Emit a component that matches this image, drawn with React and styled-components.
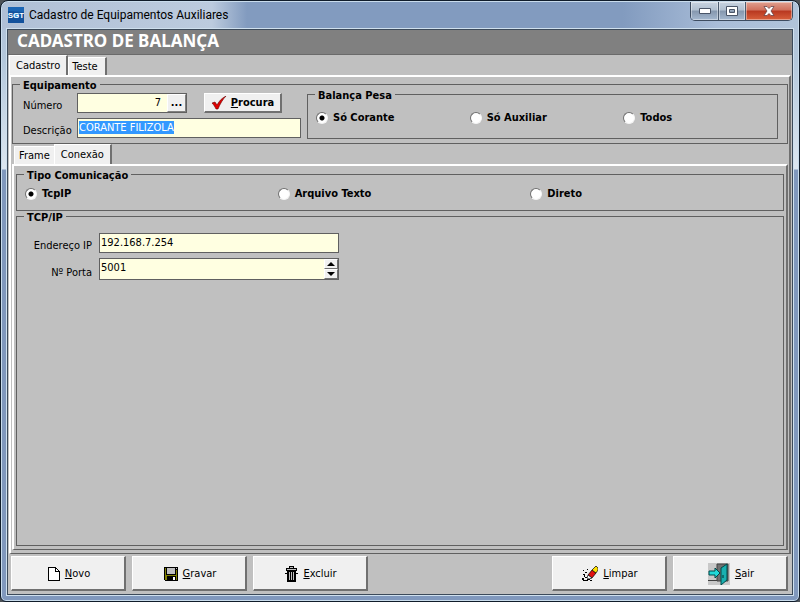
import React, { useEffect, useRef } from 'react';
import styled, { createGlobalStyle } from 'styled-components';

const GlobalStyle = createGlobalStyle`
  * {
    box-sizing: border-box;
  }
  body {
    margin: 0;
    background: #4d5257;
    color: #000;
    font-family: "DejaVu Sans Condensed", "DejaVu Sans", Tahoma, sans-serif;
    font-size: 11px;
    line-height: 14px;
  }
  input, button {
    font: inherit;
    color: inherit;
  }
`;

const Window = styled.div`
  display: flex;
  flex-direction: column;
  min-height: 100vh;
  padding: 0 6px 6px;
  border: 1px solid #101c2a;
  border-radius: 8px 8px 6px 6px;
  box-shadow: inset 0 0 0 1px #c9dcec;
  background: linear-gradient(#aebfd6 0, #b4c8dc 60px, #dce6f0 168px, #8098bd 169px, #8098bd 100%);
`;

const TitleBar = styled.header`
  display: flex;
  align-items: flex-start;
  margin: 1px -5px 0;
  padding-left: 6px;
  height: 27px;
  border-radius: 6px 6px 0 0;
  background: linear-gradient(90deg, #b0c0d6 0, #bccbde 210px, #829bbf 245px, #829bbf 78%, #a9bdd8 90%, #b0c4da 100%);
`;

const Caption = styled.h1`
  flex: 1;
  margin: 0;
  padding: 4px 0 0 5px;
  font-family: Roboto, "Noto Sans", sans-serif;
  font-size: 12px;
  font-weight: 400;
  line-height: 18px;
`;

const LogoBox = styled.div`
  padding-top: 5px;
  height: 21px;
`;

const WindowButtons = styled.div`
  display: flex;
  margin-right: 5px;
  border: 1px solid #3d4c60;
  border-top: 0;
  border-radius: 0 0 5px 5px;
  overflow: hidden;
`;

const WindowButton = styled.button`
  display: flex;
  align-items: center;
  justify-content: center;
  width: ${({ $close }) => ($close ? 47 : 27)}px;
  height: 18px;
  padding: 0;
  border: 0;
  border-left: ${({ $first }) => ($first ? 0 : 1)}px solid #4b5a6e;
  box-shadow: inset 0 0 0 1px rgba(255, 255, 255, 0.4);
  background: ${({ $close }) => ($close
    ? 'linear-gradient(#e0a090 0, #d0705c 45%, #b83820 50%, #d8603c 100%)'
    : 'linear-gradient(#c8d3e0 0, #b0bfd0 45%, #8597ae 50%, #a5b8cf 100%)')};
`;

const Client = styled.main`
  flex: 1;
  display: flex;
  flex-direction: column;
  border: 1px solid #3c4a5a;
  box-shadow: 0 0 0 1px #cfe0ee;
  background: #c0c0c0;
`;

const Heading = styled.h2`
  margin: 0;
  padding: 1px 9px 3px;
  border-bottom: 1px solid #6a6a6a;
  background: #808080;
  color: #fff;
  font-family: "Noto Sans", "Open Sans", sans-serif;
  font-size: 17px;
  line-height: 20px;
`;

const Tabs = styled.div`
  display: flex;
  align-items: flex-end;
  height: 20px;
  padding-left: ${({ $nested }) => ($nested ? 2 : 1)}px;
`;

const Tab = styled.button`
  height: ${({ $active }) => ($active ? 20 : 18)}px;
  padding: ${({ $active, $edge }) => {
    if ($active) return '0 6px';
    return $edge ? '0 7px 0 3px' : '0 4px';
  }};
  border: 0;
  border-top: 1px solid #fff;
  border-left: 1px solid #fff;
  border-right: ${({ $edge }) => ($edge ? 2 : 0)}px solid #707070;
  background: #f0f0f0;
  white-space: nowrap;
`;

const Page = styled.section`
  flex: 1;
  display: flex;
  flex-direction: column;
  margin: 0 ${({ $nested }) => ($nested ? 0 : 1)}px;
  padding: ${({ $nested }) => ($nested ? '3px 2px' : '2px 1px 3px')};
  border: 2px solid #fff;
  border-right-color: #707070;
  border-bottom: 1px solid #606060;
`;

const Group = styled.fieldset`
  min-width: 0;
  flex: ${({ $grow }) => ($grow ? 1 : 'none')};
  margin: 0;
  padding: 0;
  border: 1px solid #606060;
`;

// the caption hangs a little below the frame line
const Legend = styled.legend`
  margin-left: 7px;
  padding: 2px 3px 0;
  height: 10px;
  line-height: 10px;
  font-weight: 700;
`;

const Equipment = styled.div`
  display: flex;
  gap: 6px;
  padding: 0 9px 4px 0;
`;

const EquipmentFields = styled.div`
  display: grid;
  grid-template-columns: 58px 224px;
  column-gap: 6px;
  row-gap: 5px;
  align-content: start;
  padding-top: 4px;
`;

const Label = styled.label`
  padding: 6px 0 0 10px;
  text-align: ${({ $right }) => ($right ? 'right' : 'left')};
  white-space: nowrap;
`;

const Line = styled.div`
  display: flex;
  gap: 17px;
`;

const Box = styled.div`
  display: flex;
  width: ${({ $width }) => $width}px;
  height: ${({ $tall }) => ($tall ? 22 : 20)}px;
  border: 1px solid #606060;
  background: #ffffe1;
`;

const TextInput = styled.input`
  flex: 1;
  min-width: 0;
  height: 16px;
  padding: 0 ${({ $right }) => ($right ? 6 : 1)}px;
  border: 0;
  outline: 0;
  background: transparent;
  text-align: ${({ $right }) => ($right ? 'right' : 'left')};
  &::selection {
    background: #3399ff;
    color: #fff;
  }
`;

const BrowseButton = styled.button`
  width: 19px;
  padding: 0;
  border: 1px solid #fff;
  border-right-color: #808080;
  border-bottom-color: #808080;
  background: #f0f0f0;
  font-weight: 700;
`;

const SearchButton = styled.button`
  display: flex;
  align-items: center;
  justify-content: center;
  gap: 4px;
  width: 78px;
  height: 20px;
  padding: 0;
  border: 1px solid #fff;
  border-right: 2px solid #707070;
  border-bottom: 2px solid #707070;
  background: #f0f0f0;
  font-weight: 700;
`;

const RadioRow = styled.div`
  display: grid;
  grid-template-columns: repeat(3, 1fr);
  padding: ${({ $spaced }) => ($spaced ? '12px 0 13px 8px' : '8px 0 9px 8px')};
`;

const RadioLabel = styled.label`
  display: flex;
  align-items: center;
  gap: 5px;
  font-weight: 700;
  white-space: nowrap;
`;

const Radio = styled.input`
  appearance: none;
  width: 12px;
  height: 12px;
  margin: 0;
  border: 1px solid;
  border-color: #707070 #f4f4f4 #f4f4f4 #707070;
  border-radius: 50%;
  background: #fff;
  &:checked {
    background: radial-gradient(circle, #000 0, #000 2px, #fff 3px);
  }
`;

const BalanceGroup = styled(Group)`
  flex: 1;
`;

const TcpFields = styled.div`
  display: grid;
  grid-template-columns: 75px 240px;
  column-gap: 7px;
  row-gap: 5px;
  align-items: end;
  padding-top: 12px;
`;

const Spinner = styled.div`
  display: flex;
  flex-direction: column;
  width: 14px;
`;

const SpinButton = styled.button`
  flex: 1;
  display: flex;
  align-items: center;
  justify-content: center;
  padding: 0;
  border: 1px solid #fff;
  border-right-color: #707070;
  border-bottom-color: #707070;
  background: #f0f0f0;
`;

const Footer = styled.footer`
  display: flex;
  gap: 6px;
  padding: 2px 4px 3px 3px;
`;

const Spacer = styled.div`
  flex: 1;
`;

const ActionButton = styled.button`
  display: flex;
  align-items: center;
  justify-content: center;
  gap: 5px;
  width: 115px;
  height: 35px;
  padding: 2px 0 0 2px;
  border: 1px solid #fff;
  border-right: 2px solid #707070;
  border-bottom: 2px solid #707070;
  background: #f0f0f0;
`;

const LogoText = styled.text`
  font-family: "Liberation Sans", Arial, sans-serif;
  font-size: 8px;
  font-weight: 700;
  fill: #fff;
`;

const Logo = () => (
  <svg width="16" height="16" viewBox="0 0 16 16" aria-hidden="true">
    <rect width="16" height="16" fill="#14529c" />
    <path d="M0 0h16v5L0 4z" fill="#1c66b4" />
    <path d="M6 6h5v5H6z" fill="#3c96dc" />
    <LogoText x="8" y="11" textAnchor="middle">SGT</LogoText>
  </svg>
);

const CheckIcon = () => (
  <svg width="16" height="14" viewBox="0 0 16 14" aria-hidden="true">
    <path d="M1 7l3-1 2 3C8 5 11 2 15 0 12 3 9 8 7 13H5C4 11 3 9 1 7z" fill="#e00000" stroke="#600" strokeWidth=".6" />
  </svg>
);

const NewIcon = () => (
  <svg width="12" height="14" viewBox="0 0 12 14" shapeRendering="crispEdges" aria-hidden="true">
    <path d="M.5.5h7l4 4v9H.5z" fill="#fff" stroke="#000" />
    <path d="M7.500.5v4h4" fill="none" stroke="#000" />
  </svg>
);

const SaveIcon = () => (
  <svg width="14" height="14" viewBox="0 0 14 14" shapeRendering="crispEdges" aria-hidden="true">
    <path d="M0 0h14v14H1l-1-1z" fill="#000" />
    <path d="M1 1h1v7h10V3h1v10H1z" fill="#808000" />
    <path d="M3 1h8v6H3z" fill="#c0c0c0" />
    <path d="M12 1h1v1h-1z" fill="#c0c0c0" />
    <path d="M3 9h9v4H3z" fill="#000" />
    <path d="M9 10h2v3H9z" fill="#fff" />
  </svg>
);

const TrashIcon = () => (
  <svg width="13" height="16" viewBox="0 0 13 16" shapeRendering="crispEdges" aria-hidden="true">
    <path d="M4 0h5v2h3v3H1V2h3zM2 5h9v11H2z" fill="#000" />
    <path d="M5 1h3v1H5zM2 3h9v1H2z" fill="#c0c0c0" />
    <path d="M4 6h1v8H4zM6 6h1v8H6zM8 6h1v8H8z" fill="#c0c0c0" />
    <path d="M0 7h2v1H0zM11 7h2v1h-2z" fill="#000" />
  </svg>
);

const EraserIcon = () => (
  <svg width="16" height="16" viewBox="0 0 16 16" aria-hidden="true">
    <path d="M6 9l4-5 4 3-4 5z" fill="#e01010" stroke="#000" strokeWidth=".7" />
    <path d="M10 4l4-4 2 2v2l-2 3z" fill="#ffe000" stroke="#000" strokeWidth=".7" />
    <path d="M6 9l-1 3 2 1 3-1z" fill="#fff" stroke="#000" strokeWidth=".7" />
    <path d="M1 4h1v1H1zM5 3h1v1H5zM3 6h2v1H3zM1 8h2v1H1zM2 9h1v2H2zM0 12h2v2H0zM3 11h2v1H3zM1 14h5v1H1zM5 13h3v1H5zM8 14h2v1H8z" fill="#000" shapeRendering="crispEdges" />
  </svg>
);

const ExitIcon = () => (
  <svg width="22" height="22" viewBox="0 0 22 22" aria-hidden="true">
    <path d="M0 0h22v22H0z" fill="#c8c8c8" />
    <path d="M9 1h11v17H9z" fill="#707070" stroke="#404040" />
    <path d="M0 17h9v1H0z" fill="#404040" />
    <path d="M13 5l6-4v16l-6 5z" fill="#18b0b0" stroke="#004848" />
    <path d="M15 12v3" stroke="#003030" />
    <path d="M1 8h6V5l5 5-5 5v-3H1z" fill="#20d8d8" stroke="#004848" />
  </svg>
);

const actions = [
  { key: 'N', rest: 'ovo', icon: <NewIcon /> },
  { key: 'G', rest: 'ravar', icon: <SaveIcon /> },
  { key: 'E', rest: 'xcluir', icon: <TrashIcon /> },
];

const exitActions = [
  { key: 'L', rest: 'impar', icon: <EraserIcon /> },
  { key: 'S', rest: 'air', icon: <ExitIcon /> },
];

const renderAction = ({ key, rest, icon }) => (
  <ActionButton key={key} type="button">
    {icon}
    <span><u>{key}</u>{rest}</span>
  </ActionButton>
);

const RadioGroup = ({ name, options, spaced }) => (
  <RadioRow $spaced={spaced}>
    {options.map((option, i) => (
      <RadioLabel key={option}>
        <Radio type="radio" name={name} defaultChecked={i === 0} />
        {option}
      </RadioLabel>
    ))}
  </RadioRow>
);

const App = () => {
  const description = useRef(null);

  useEffect(() => {
    description.current.focus();
    description.current.select();
  }, []);

  return (
    <>
      <GlobalStyle />
      <Window>
        <TitleBar>
          <LogoBox><Logo /></LogoBox>
          <Caption>Cadastro de Equipamentos Auxiliares</Caption>
          <WindowButtons>
            <WindowButton type="button" aria-label="Minimizar" $first>
              <svg width="12" height="6" viewBox="0 0 12 6"><path d="M.5.5h11v5H.5z" fill="#fff" stroke="#4a5568" /></svg>
            </WindowButton>
            <WindowButton type="button" aria-label="Maximizar">
              <svg width="12" height="10" viewBox="0 0 12 10"><path d="M.5.5h11v9H.5zM3.500 3.500v3h5v-3z" fill="#fff" fillRule="evenodd" stroke="#4a5568" /></svg>
            </WindowButton>
            <WindowButton type="button" aria-label="Fechar" $close>
              <svg width="12" height="10" viewBox="0 0 12 10"><path d="M1 .5h3l2 2 2-2h3L8 5l3 4.500H8l-2-2-2 2H1L4 5z" fill="#fff" stroke="#5a3a40" strokeWidth=".7" /></svg>
            </WindowButton>
          </WindowButtons>
        </TitleBar>
        <Client>
          <Heading>CADASTRO DE BALANÇA</Heading>
          <Tabs>
            <Tab type="button" $active $edge>Cadastro</Tab>
            <Tab type="button" $edge>Teste</Tab>
          </Tabs>
          <Page>
            <Group>
              <Legend>Equipamento</Legend>
              <Equipment>
                <EquipmentFields>
                  <Label htmlFor="numero">Número</Label>
                  <Line>
                    <Box $width={110}>
                      <TextInput id="numero" defaultValue="7" $right />
                      <BrowseButton type="button">...</BrowseButton>
                    </Box>
                    <SearchButton type="button">
                      <CheckIcon />
                      <span><u>P</u>rocura</span>
                    </SearchButton>
                  </Line>
                  <Label htmlFor="descricao">Descrição</Label>
                  <Box $width={224}>
                    <TextInput id="descricao" ref={description} defaultValue="CORANTE FILIZOLA" />
                  </Box>
                </EquipmentFields>
                <BalanceGroup>
                  <Legend>Balança Pesa</Legend>
                  <RadioGroup name="pesa" options={['Só Corante', 'Só Auxiliar', 'Todos']} spaced />
                </BalanceGroup>
              </Equipment>
            </Group>
            <Tabs $nested>
              <Tab type="button">Frame</Tab>
              <Tab type="button" $active $edge>Conexão</Tab>
            </Tabs>
            <Page $nested>
              <Group>
                <Legend>Tipo Comunicação</Legend>
                <RadioGroup name="tipo" options={['TcpIP', 'Arquivo Texto', 'Direto']} />
              </Group>
              <Group $grow>
                <Legend>TCP/IP</Legend>
                <TcpFields>
                  <Label htmlFor="ip" $right>Endereço IP</Label>
                  <Box $width={240}>
                    <TextInput id="ip" defaultValue="192.168.7.254" />
                  </Box>
                  <Label htmlFor="porta" $right>Nº Porta</Label>
                  <Box $width={240} $tall>
                    <TextInput id="porta" defaultValue="5001" />
                    <Spinner>
                      <SpinButton type="button" aria-label="Aumentar">
                        <svg width="8" height="4" viewBox="0 0 8 4"><path d="M0 4l4-4 4 4z" /></svg>
                      </SpinButton>
                      <SpinButton type="button" aria-label="Diminuir">
                        <svg width="8" height="4" viewBox="0 0 8 4"><path d="M0 0l4 4 4-4z" /></svg>
                      </SpinButton>
                    </Spinner>
                  </Box>
                </TcpFields>
              </Group>
            </Page>
          </Page>
          <Footer>
            {actions.map(renderAction)}
            <Spacer />
            {exitActions.map(renderAction)}
          </Footer>
        </Client>
      </Window>
    </>
  );
};

export default App;
